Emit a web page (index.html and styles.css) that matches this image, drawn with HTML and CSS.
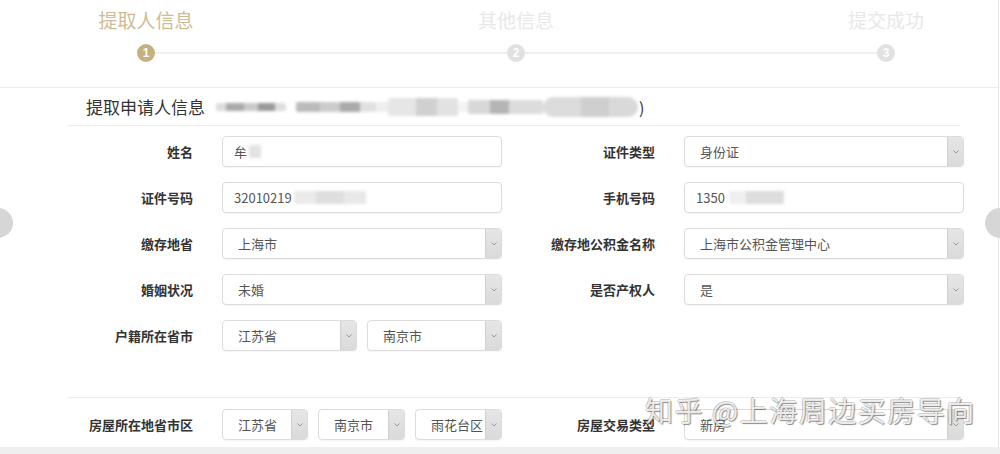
FILE: index.html
```html
<!DOCTYPE html>
<html lang="zh-CN">
<head>
<meta charset="utf-8">
<title>提取人信息</title>
<link rel="stylesheet" href="styles.css">
</head>
<body>
<div class="page">
  <div class="card">
    <div class="steps">
      <div class="step active"><div class="step-title">提取人信息</div><div class="step-dot">1</div></div>
      <div class="step"><div class="step-title">其他信息</div><div class="step-dot">2</div></div>
      <div class="step"><div class="step-title">提交成功</div><div class="step-dot">3</div></div>
    </div>

    <div class="section">
      <div class="section-head">
        <span class="section-title">提取申请人信息</span>
        <span class="blurred">
          <span class="bk k1"></span><span class="bk k2"></span><span class="bk k3"></span><span class="bk k4"></span>
          <span class="bk k5"></span><span class="bk k6"></span><span class="bk k7"></span><span class="bk k8"></span>
        </span>
        <span class="paren">)</span>
      </div>
      <div class="form">
        <div class="row">
          <span class="lbl">姓名</span>
          <div class="field input">牟<span class="mask m-name"></span></div>
          <span class="lbl">证件类型</span>
          <div class="field select"><span class="val">身份证</span><span class="arrow"><svg viewBox="0 0 6 4" width="6" height="4"><path d="M0.5 0.5 L3 3 L5.5 0.5" fill="none" stroke="#9a9a9a" stroke-width="1"/></svg></span></div>
        </div>
        <div class="row">
          <span class="lbl">证件号码</span>
          <div class="field input">32010219<span class="mask m-id"></span></div>
          <span class="lbl">手机号码</span>
          <div class="field input">1350<span class="mask m-phone"></span></div>
        </div>
        <div class="row">
          <span class="lbl">缴存地省</span>
          <div class="field select"><span class="val">上海市</span><span class="arrow"><svg viewBox="0 0 6 4" width="6" height="4"><path d="M0.5 0.5 L3 3 L5.5 0.5" fill="none" stroke="#9a9a9a" stroke-width="1"/></svg></span></div>
          <span class="lbl">缴存地公积金名称</span>
          <div class="field select"><span class="val">上海市公积金管理中心</span><span class="arrow"><svg viewBox="0 0 6 4" width="6" height="4"><path d="M0.5 0.5 L3 3 L5.5 0.5" fill="none" stroke="#9a9a9a" stroke-width="1"/></svg></span></div>
        </div>
        <div class="row">
          <span class="lbl">婚姻状况</span>
          <div class="field select"><span class="val">未婚</span><span class="arrow"><svg viewBox="0 0 6 4" width="6" height="4"><path d="M0.5 0.5 L3 3 L5.5 0.5" fill="none" stroke="#9a9a9a" stroke-width="1"/></svg></span></div>
          <span class="lbl">是否产权人</span>
          <div class="field select"><span class="val">是</span><span class="arrow"><svg viewBox="0 0 6 4" width="6" height="4"><path d="M0.5 0.5 L3 3 L5.5 0.5" fill="none" stroke="#9a9a9a" stroke-width="1"/></svg></span></div>
        </div>
        <div class="row">
          <span class="lbl">户籍所在省市</span>
          <div class="group two">
            <div class="field select"><span class="val">江苏省</span><span class="arrow"><svg viewBox="0 0 6 4" width="6" height="4"><path d="M0.5 0.5 L3 3 L5.5 0.5" fill="none" stroke="#9a9a9a" stroke-width="1"/></svg></span></div>
            <div class="field select"><span class="val">南京市</span><span class="arrow"><svg viewBox="0 0 6 4" width="6" height="4"><path d="M0.5 0.5 L3 3 L5.5 0.5" fill="none" stroke="#9a9a9a" stroke-width="1"/></svg></span></div>
          </div>
        </div>
      </div>
    </div>

    <div class="section section2">
      <div class="form">
        <div class="row">
          <span class="lbl">房屋所在地省市区</span>
          <div class="group three">
            <div class="field select"><span class="val">江苏省</span><span class="arrow"><svg viewBox="0 0 6 4" width="6" height="4"><path d="M0.5 0.5 L3 3 L5.5 0.5" fill="none" stroke="#9a9a9a" stroke-width="1"/></svg></span></div>
            <div class="field select"><span class="val">南京市</span><span class="arrow"><svg viewBox="0 0 6 4" width="6" height="4"><path d="M0.5 0.5 L3 3 L5.5 0.5" fill="none" stroke="#9a9a9a" stroke-width="1"/></svg></span></div>
            <div class="field select"><span class="val">雨花台区</span><span class="arrow"><svg viewBox="0 0 6 4" width="6" height="4"><path d="M0.5 0.5 L3 3 L5.5 0.5" fill="none" stroke="#9a9a9a" stroke-width="1"/></svg></span></div>
          </div>
          <span class="lbl">房屋交易类型</span>
          <div class="field select"><span class="val">新房</span><span class="arrow"><svg viewBox="0 0 6 4" width="6" height="4"><path d="M0.5 0.5 L3 3 L5.5 0.5" fill="none" stroke="#9a9a9a" stroke-width="1"/></svg></span></div>
        </div>
      </div>
    </div>
  </div>
  <div class="footer-band"></div>

  <div class="nav nav-left"></div>
  <div class="nav nav-right"></div>
  <div class="watermark">知乎 @上海周边买房导向</div>
</div>
</body>
</html>
```

FILE: styles.css
```css
html, body {
  margin: 0;
  padding: 0;
  background: #ffffff;
}

.page {
  position: relative;
  width: 1000px;
  height: 454px;
  overflow: hidden;
  font-family: "Noto Sans CJK SC", "Noto Sans", "Liberation Sans", sans-serif;
  color: #333;
}

.card {
  width: 998px;
  height: 447px;
  background: #fff;
  border-right: 1px solid #e6e6e6;
  display: flex;
  flex-direction: column;
}

/* stepper */
.steps {
  position: relative;
  height: 87px;
  border-bottom: 1px solid #ececec;
  display: flex;
  gap: 170px;
  padding-left: 46px;
}
.steps::before {
  content: "";
  position: absolute;
  left: 146px;
  width: 740px;
  top: 52px;
  height: 2px;
  background: #efefef;
}
.step {
  position: relative;
  width: 200px;
  display: flex;
  flex-direction: column;
  align-items: center;
}
.step-title {
  margin-top: 6px;
  font-size: 19px;
  line-height: 28px;
  color: #e8e8e8;
}
.step-dot {
  margin-top: 10px;
  width: 18px;
  height: 18px;
  border-radius: 50%;
  background: #e1e1e1;
  color: #fff;
  font-size: 12px;
  font-weight: bold;
  line-height: 18px;
  text-align: center;
  font-family: "Liberation Sans", sans-serif;
}
.step.active .step-title { color: #cdbc94; }
.step.active .step-dot { background: #c5b17f; }

/* sections */
.section {
  margin-left: 68px;
  width: 892px;
}
.section-head {
  height: 37px;
  border-bottom: 1px solid #eeeeee;
  display: flex;
  align-items: center;
  padding-left: 18px;
}
.section-title {
  font-size: 17px;
  color: #333;
}
.blurred {
  display: flex;
  align-items: center;
  margin-left: 11px;
  height: 22px;
  filter: blur(1.6px);
}
.bk { display: block; border-radius: 2px; }
.k1 { width: 70px; height: 8px; background: linear-gradient(90deg, #ddd 0 15%, #aaa 15% 40%, #c9c9c9 40% 60%, #9a9a9a 60% 85%, #ddd 85%); }
.k2 { width: 10px; height: 8px; background: transparent; }
.k3 { width: 80px; height: 10px; background: linear-gradient(90deg, #bbb 0 30%, #ccc 30% 55%, #aaa 55% 80%, #e0e0e0 80%); }
.k4 { width: 12px; height: 10px; background: #eee; }
.k5 { width: 70px; height: 18px; background: linear-gradient(90deg, #e6e6e6 0 40%, #d0d0d0 40% 70%, #e2e2e2 70%); }
.k6 { width: 10px; height: 10px; background: #f3f3f3; }
.k7 { width: 75px; height: 14px; background: linear-gradient(90deg, #d8d8d8 0 30%, #b5b5b5 30% 55%, #dcdcdc 55%); }
.k8 { width: 95px; height: 20px; border-radius: 10px; background: linear-gradient(90deg, #dcdcdc 0 40%, #cfcfcf 40% 70%, #d9d9d9 70%); }
.paren {
  font-size: 16px;
  color: #333;
  margin-left: 1px;
}

.form {
  padding-top: 10px;
  display: flex;
  flex-direction: column;
  gap: 15px;
}
.row {
  display: grid;
  grid-template-columns: 125px 280px 124px 280px;
  column-gap: 29px;
  height: 31px;
}
.lbl {
  text-align: right;
  font-size: 13px;
  font-weight: bold;
  line-height: 31px;
  color: #333;
}

.field {
  box-sizing: border-box;
  height: 31px;
  border: 1px solid #dcdcdc;
  border-radius: 4px;
  background: #fff;
  font-size: 13px;
  color: #555;
  display: flex;
  align-items: center;
  box-shadow: 0 1px 1px rgba(0, 0, 0, 0.04);
}
.input { padding-left: 11px; }
.select { padding-left: 15px; justify-content: space-between; overflow: hidden; }
.select .val { white-space: nowrap; }
.arrow {
  align-self: stretch;
  width: 15px;
  flex: none;
  background: linear-gradient(180deg, #e6e6e6, #dadada);
  border-left: 1px solid #d0d0d0;
  display: flex;
  align-items: center;
  justify-content: center;
}
.arrow svg { display: block; }

.mask {
  display: inline-block;
  height: 13px;
  background: #e3e3e3;
  filter: blur(1.5px);
}
.m-name { width: 12px; margin-left: 2px; }
.m-id { width: 72px; margin-left: 2px; background: linear-gradient(90deg, #ebebeb 0 30%, #dedede 30% 70%, #e8e8e8 70%); }
.m-phone { width: 55px; margin-left: 4px; background: linear-gradient(90deg, #f0f0f0 0 30%, #dddddd 30%); }

.group { display: flex; gap: 10px; }
.group.two .field { width: 135px; }
.group.three .field { width: 87px; }
.group.three .field:first-child { width: 86px; }

.section2 {
  margin-top: 46px;
  border-top: 1px solid #eeeeee;
}
.section2 .form { padding-top: 11px; }

.footer-band {
  height: 7px;
  background: #efefef;
}

/* overlays */
.nav {
  position: absolute;
  top: 208px;
  width: 30px;
  height: 30px;
  border-radius: 50%;
  background: #d6d6d6;
}
.nav-left { left: -17px; }
.nav-right { left: 985px; }

.watermark {
  position: absolute;
  left: 645px;
  top: 392px;
  font-size: 28px;
  line-height: 36px;
  color: rgba(255, 255, 255, 0.85);
  letter-spacing: 1.5px;
  text-shadow: 1px 1px 1px rgba(0, 0, 0, 0.45), -1px 0 0 rgba(0, 0, 0, 0.2), 0 -1px 0 rgba(0, 0, 0, 0.2);
  white-space: nowrap;
}
```
